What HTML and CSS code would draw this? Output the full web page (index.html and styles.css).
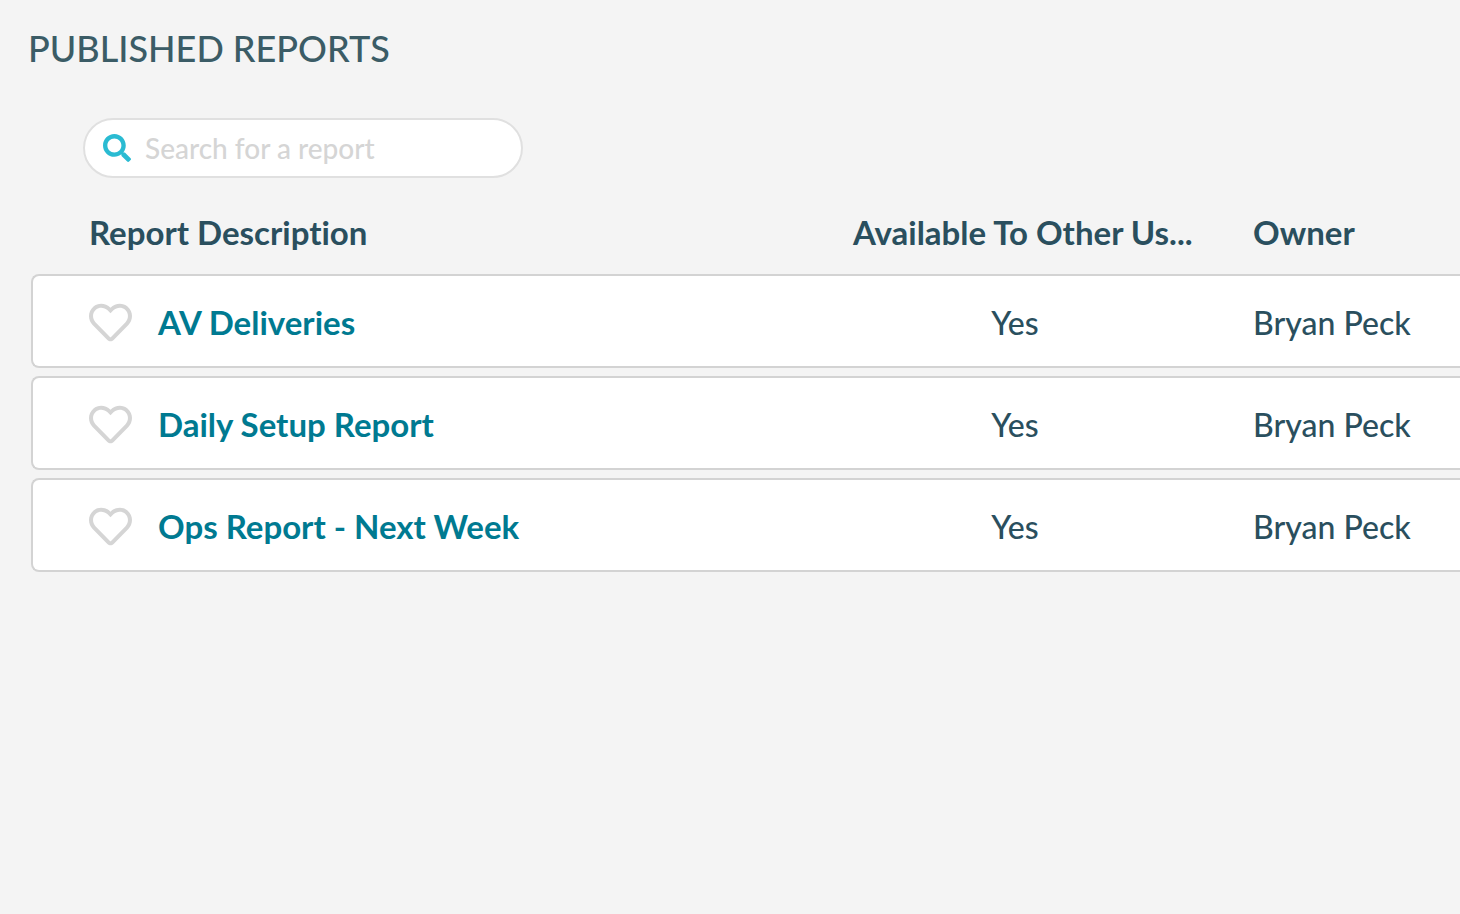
FILE: index.html
```html
<!DOCTYPE html>
<html lang="en">

<head>
    <meta charset="UTF-8">
    <meta name="viewport" content="width=device-width, initial-scale=1.0">
    <title>Published Reports</title>
    <link rel="stylesheet" href="styles.css">
</head>

<body>
    <svg class="sprite" aria-hidden="true">
        <symbol id="icon-search" viewBox="0 0 512 512">
            <path d="M505 442.700L405.300 343c-4.500-4.500-10.600-7-17-7H372c27.600-35.300 44-79.700 44-128C416 93.100 322.900 0 208 0S0 93.100 0 208s93.100 208 208 208c48.300 0 92.700-16.400 128-44v16.300c0 6.400 2.500 12.500 7 17l99.700 99.700c9.400 9.400 24.600 9.400 33.900 0l28.300-28.300c9.400-9.400 9.400-24.600.1-34zM208 336c-70.700 0-128-57.200-128-128 0-70.700 57.200-128 128-128 70.700 0 128 57.200 128 128 0 70.700-57.200 128-128 128z"/>
        </symbol>
        <symbol id="icon-heart" viewBox="0 0 512 512">
            <path d="M458.400 64.300C400.600 15.700 311.300 23 256 79.300 200.700 23 111.400 15.600 53.600 64.300-21.600 127.600-10.600 230.800 43 285.500l175.400 178.700c10 10.200 23.400 15.900 37.600 15.900 14.300 0 27.600-5.600 37.600-15.800L469 285.600c53.500-54.700 64.700-157.900-10.600-221.300zm-23.600 187.500L259.400 430.500c-2.400 2.400-4.400 2.400-6.800 0L77.200 251.800c-36.500-37.200-43.900-107.600 7.300-150.700 38.900-32.700 98.900-27.800 136.500 10.500l35 35.700 35-35.700c37.800-38.500 97.800-43.200 136.500-10.600 51.100 43.100 43.500 113.900 7.300 150.800z"/>
        </symbol>
    </svg>

    <main class="page">
        <h1>PUBLISHED REPORTS</h1>

        <label class="search">
            <svg class="search-icon" aria-hidden="true"><use href="#icon-search"/></svg>
            <input type="text" placeholder="Search for a report" aria-label="Search for a report">
        </label>

        <table class="reports">
            <thead>
                <tr>
                    <th class="name">Report Description</th>
                    <th class="shared">Available To Other Us...</th>
                    <th class="owner">Owner</th>
                </tr>
            </thead>
            <tbody>
                <tr>
                    <td class="name">
                        <div class="report">
                            <button type="button" class="favorite" aria-label="Favorite AV Deliveries"><svg><use href="#icon-heart"/></svg></button>
                            <a href="#">AV Deliveries</a>
                        </div>
                    </td>
                    <td class="shared">Yes</td>
                    <td class="owner">Bryan Peck</td>
                </tr>
                <tr>
                    <td class="name">
                        <div class="report">
                            <button type="button" class="favorite" aria-label="Favorite Daily Setup Report"><svg><use href="#icon-heart"/></svg></button>
                            <a href="#">Daily Setup Report</a>
                        </div>
                    </td>
                    <td class="shared">Yes</td>
                    <td class="owner">Bryan Peck</td>
                </tr>
                <tr>
                    <td class="name">
                        <div class="report">
                            <button type="button" class="favorite" aria-label="Favorite Ops Report - Next Week"><svg><use href="#icon-heart"/></svg></button>
                            <a href="#">Ops Report - Next Week</a>
                        </div>
                    </td>
                    <td class="shared">Yes</td>
                    <td class="owner">Bryan Peck</td>
                </tr>
            </tbody>
        </table>
    </main>
</body>

</html>
```

FILE: styles.css
```css
* {
    padding: 0;
    margin: 0;
    box-sizing: border-box;
}

body {
    background-color: #f4f4f4;
    color: #2a4f5e;
    font-family: Lato, sans-serif;
    font-size: 33px;
    font-variant-ligatures: none;
    font-weight: 500;
    line-height: 40px;
}

.sprite {
    display: none;
}

.page {
    padding: 28px 0 28px 28px;
}

h1 {
    color: #3b5c66;
    font-size: 36px;
    font-weight: 500;
    line-height: 40px;
}

/**** SEARCH ****/

.search {
    display: flex;
    align-items: center;
    gap: 14px;
    width: 440px;
    height: 60px;
    margin: 50px 0 16px 55px;
    padding: 0 18px;
    background-color: #fff;
    border: 2px solid #e0e0e0;
    border-radius: 30px;
}

.search-icon {
    flex: none;
    width: 28px;
    height: 28px;
    fill: #2abbd2;
}

.search input {
    flex: 1;
    min-width: 0;
    border: 0;
    outline: 0;
    background: none;
    color: inherit;
    font: inherit;
    font-size: 28px;
}

.search input::placeholder {
    color: #d5d5d5;
    opacity: 1;
}

/**** REPORTS ****/

.reports {
    width: calc(100% - 3px);
    margin-left: 3px;
    table-layout: fixed;
    border-collapse: separate;
    border-spacing: 0 8px;
}

th {
    height: 64px;
    padding-bottom: 4px;
    font-weight: 700;
    text-align: left;
    white-space: nowrap;
}

td {
    height: 94px;
    padding-top: 2px;
    background-color: #fff;
    border: solid #d3d3d3;
    border-width: 2px 0;
}

td.name {
    padding-left: 56px;
    border-left-width: 2px;
    border-radius: 8px 0 0 8px;
}

th.name {
    padding-left: 58px;
}

.shared {
    width: 370px;
}

td.shared {
    padding-right: 46px;
    text-align: center;
}

.owner {
    width: 237px;
    padding-left: 30px;
}

td.shared,
td.owner {
    padding-top: 4px;
    font-size: 32px;
}

.report {
    display: flex;
    align-items: center;
    gap: 26px;
}

.report a {
    color: #007a91;
    font-weight: 700;
    text-decoration: none;
}

.favorite {
    width: 43px;
    height: 43px;
    border: 0;
    background: none;
    cursor: pointer;
}

.favorite svg {
    display: block;
    width: 100%;
    height: 100%;
    fill: #d5d5d5;
}
```
